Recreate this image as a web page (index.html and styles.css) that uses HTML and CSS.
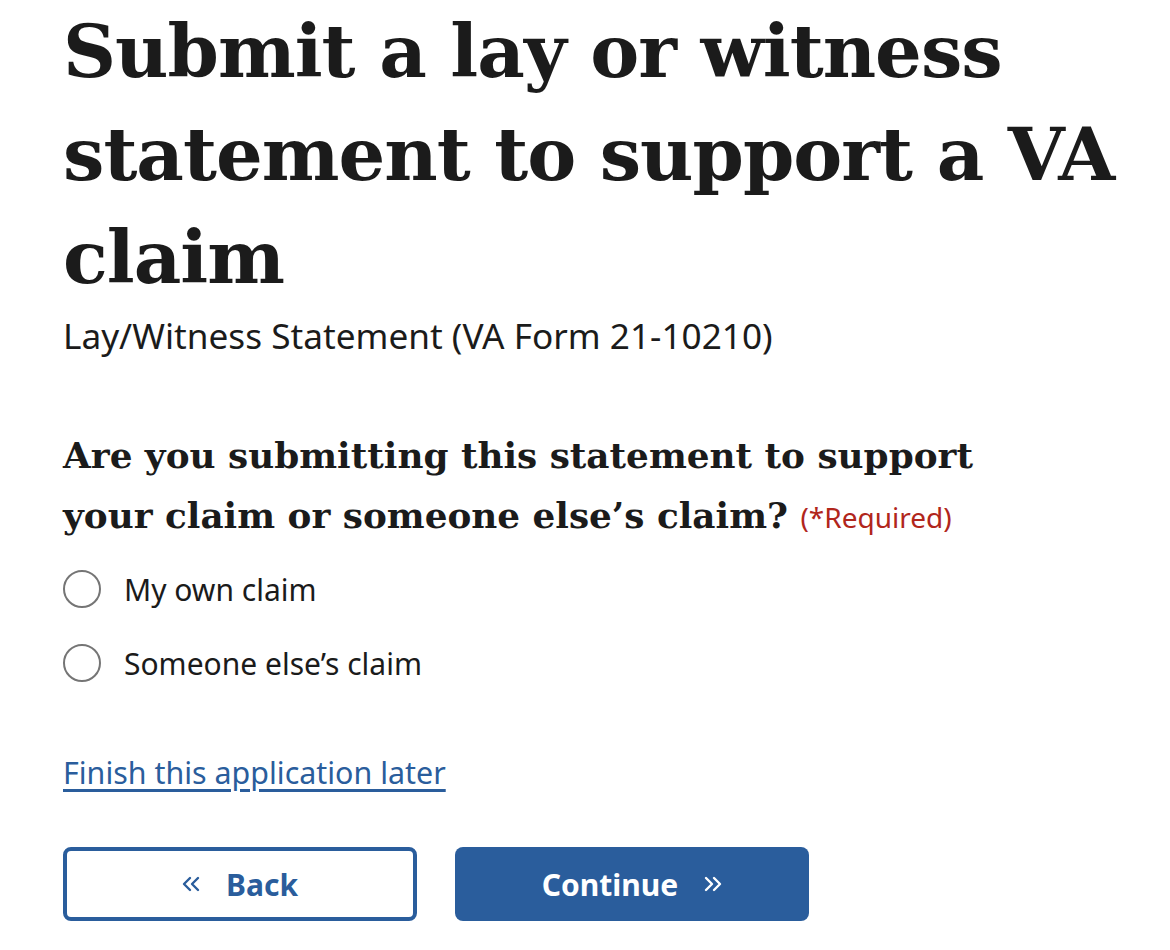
FILE: index.html
```html
<!DOCTYPE html>
<html lang="en">
<head>
<meta charset="utf-8">
<title>Submit a lay or witness statement</title>
<link rel="stylesheet" href="styles.css">
</head>
<body>
<main class="page">
  <h1 class="title">Submit a lay or witness statement to support a VA claim</h1>
  <p class="subtitle">Lay/Witness Statement (VA Form 21-10210)</p>

  <fieldset class="question">
    <legend class="question-legend">Are you submitting this statement to support your claim or someone else’s claim? <span class="required">(*Required)</span></legend>
    <label class="radio">
      <span class="radio-circle"></span>
      <span class="radio-label">My own claim</span>
    </label>
    <label class="radio">
      <span class="radio-circle"></span>
      <span class="radio-label">Someone else’s claim</span>
    </label>
  </fieldset>

  <a class="later-link" href="#">Finish this application later</a>

  <div class="actions">
    <button class="btn btn-outline" type="button">
      <svg class="chev" width="18" height="16" viewBox="0 0 18 16"><path d="M8 2 L2 8 L8 14 M16 2 L10 8 L16 14" fill="none" stroke="currentColor" stroke-width="2.4" stroke-linecap="round" stroke-linejoin="round"/></svg>
      <span>Back</span>
    </button>
    <button class="btn btn-primary" type="button">
      <span>Continue</span>
      <svg class="chev" width="18" height="16" viewBox="0 0 18 16"><path d="M2 2 L8 8 L2 14 M10 2 L16 8 L10 14" fill="none" stroke="currentColor" stroke-width="2.4" stroke-linecap="round" stroke-linejoin="round"/></svg>
    </button>
  </div>
</main>
</body>
</html>
```

FILE: styles.css
```css
html, body {
  margin: 0;
  padding: 0;
  background: #ffffff;
}

.page {
  padding: 0 0 0 63px;
  color: #1b1b1b;
  font-family: "Noto Sans", "Open Sans", sans-serif;
}

.title {
  font-family: "DejaVu Serif", serif;
  font-weight: 700;
  font-size: 73.5px;
  line-height: 103px;
  letter-spacing: -1px;
  margin: 0;
  width: 1100px;
  color: #1b1b1b;
}

.subtitle {
  font-family: "Noto Sans", sans-serif;
  font-size: 35.2px;
  line-height: 44px;
  margin: 4px 0 0 0;
  color: #1b1b1b;
}

.question {
  border: 0;
  padding: 0;
  margin: 68px 0 0 0;
}

.question-legend {
  padding: 0;
  font-family: "DejaVu Serif", serif;
  font-weight: 700;
  font-size: 35.8px;
  line-height: 60px;
  width: 960px;
  color: #1b1b1b;
}

.required {
  display: inline-block;
  font-family: "Noto Sans", sans-serif;
  font-weight: 400;
  font-size: 28px;
  line-height: 1;
  color: #b1261c;
}

.radio {
  display: flex;
  align-items: center;
  gap: 23px;
  height: 74px;
}

.radio:first-of-type {
  margin-top: 7px;
}

.radio-circle {
  width: 34px;
  height: 34px;
  border: 2px solid #757575;
  border-radius: 50%;
  flex: none;
}

.radio-label {
  font-size: 30px;
  color: #1b1b1b;
}

.later-link {
  display: inline-block;
  margin-top: 53px;
  font-size: 30.4px;
  line-height: 40px;
  color: #2a5d9c;
  text-decoration: underline;
  text-decoration-thickness: 3px;
  text-underline-offset: 5px;
}

.actions {
  display: flex;
  gap: 38px;
  margin-top: 54px;
}

.btn {
  width: 354px;
  height: 74px;
  border-radius: 8px;
  display: flex;
  align-items: center;
  justify-content: center;
  gap: 26px;
  font-family: "Noto Sans", sans-serif;
  font-weight: 700;
  font-size: 30px;
  cursor: pointer;
  box-sizing: border-box;
}

.btn-outline {
  background: #ffffff;
  border: 4px solid #2a5d9c;
  color: #2a5d9c;
}

.btn-primary {
  background: #2a5d9c;
  border: 0;
  color: #ffffff;
}

.chev {
  flex: none;
}
```
